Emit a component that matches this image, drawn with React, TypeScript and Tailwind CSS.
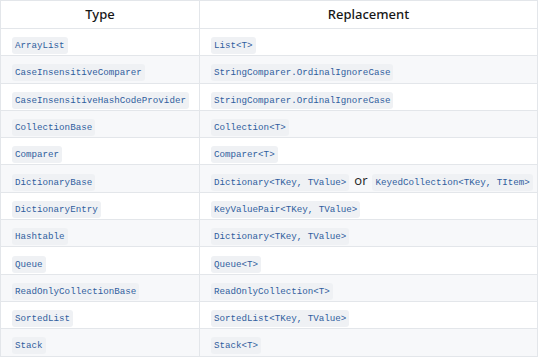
const rows: [string, string[]][] = [
  ['ArrayList', ['List<T>']],
  ['CaseInsensitiveComparer', ['StringComparer.OrdinalIgnoreCase']],
  ['CaseInsensitiveHashCodeProvider', ['StringComparer.OrdinalIgnoreCase']],
  ['CollectionBase', ['Collection<T>']],
  ['Comparer', ['Comparer<T>']],
  ['DictionaryBase', ['Dictionary<TKey, TValue>', 'KeyedCollection<TKey, TItem>']],
  ['DictionaryEntry', ['KeyValuePair<TKey, TValue>']],
  ['Hashtable', ['Dictionary<TKey, TValue>']],
  ['Queue', ['Queue<T>']],
  ['ReadOnlyCollectionBase', ['ReadOnlyCollection<T>']],
  ['SortedList', ['SortedList<TKey, TValue>']],
  ['Stack', ['Stack<T>']],
];

function Code({ children }: { children: string }) {
  return (
    <code className="inline-block rounded-[3px] bg-[#eff1f4] px-[3px] py-[2px] font-['Liberation_Mono',monospace] text-[9.2px] leading-[13px] text-[#2f5e9e] whitespace-pre">
      {children}
    </code>
  );
}

export default function App() {
  return (
    <div className="w-[540px] h-[359px] bg-white font-['Open_Sans',sans-serif] text-[#171717]">
      <table className="w-[538px] border-collapse border border-[#e3e6ea] table-fixed">
        <colgroup>
          <col className="w-[199px]" />
          <col />
        </colgroup>
        <thead>
          <tr className="h-[28px] bg-white font-['Noto_Sans',sans-serif]">
            <th className="border border-[#e3e6ea] text-[13px] font-medium">Type</th>
            <th className="border border-[#e3e6ea] text-[13px] font-medium">Replacement</th>
          </tr>
        </thead>
        <tbody>
          {rows.map(([type, repl], i) => (
            <tr key={type} className={`h-[27.3px] ${i % 2 === 1 ? 'bg-[#f7f8fa]' : 'bg-white'}`}>
              <td className="border border-[#e3e6ea] pl-[11px] align-middle">
                <Code>{type}</Code>
              </td>
              <td className="border border-[#e3e6ea] pl-[11px] align-middle">
                {repl.map((r, j) => (
                  <span key={r}>
                    {j > 0 && <span className="mx-[5px] text-[13px] text-[#222]">or</span>}
                    <Code>{r}</Code>
                  </span>
                ))}
              </td>
            </tr>
          ))}
        </tbody>
      </table>
    </div>
  );
}
